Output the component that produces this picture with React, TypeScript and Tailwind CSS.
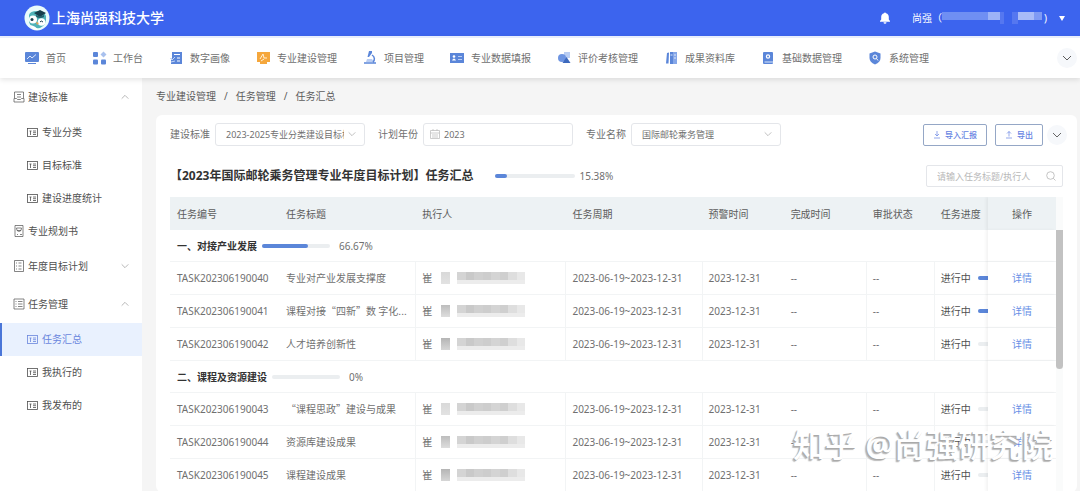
import { Fragment, type ReactNode } from "react";

interface Task {
  code: string;
  title: string;
  progress: number;
}

interface Group {
  name: string;
  percent: string;
  value: number;
  tasks: Task[];
}

const groups: Group[] = [
  {
    name: "一、对接产业发展",
    percent: "66.67%",
    value: 67,
    tasks: [
      { code: "TASK202306190040", title: "专业对产业发展支撑度", progress: 100 },
      { code: "TASK202306190041", title: "课程对接“四新”数 字化...", progress: 100 },
      { code: "TASK202306190042", title: "人才培养创新性", progress: 0 },
    ],
  },
  {
    name: "二、课程及资源建设",
    percent: "0%",
    value: 0,
    tasks: [
      { code: "TASK202306190043", title: "“课程思政”建设与成果", progress: 0 },
      { code: "TASK202306190044", title: "资源库建设成果", progress: 0 },
      { code: "TASK202306190045", title: "课程建设成果", progress: 0 },
    ],
  },
];

const navItems: { label: string; icon: ReactNode }[] = [
  {
    label: "首页",
    icon: (
      <>
        <rect x="1" y="2" width="14" height="10" rx="1" fill="#5b86d9" />
        <path d="M4 13.5h8" stroke="#5b86d9" />
        <path d="M3 9l3-3 2 2 4-3.5" fill="none" stroke="#dbe7fb" />
      </>
    ),
  },
  {
    label: "工作台",
    icon: (
      <>
        <rect x="2" y="2" width="5" height="5" rx="1" fill="#5b86d9" />
        <rect x="2" y="9.5" width="5" height="5" rx="1" fill="#5b86d9" />
        <rect x="10" y="9.5" width="5" height="5" rx="1" fill="#5b86d9" />
        <path d="M12.5 1.5l3 3-3 3-3-3z" fill="#a9c1ee" />
      </>
    ),
  },
  {
    label: "数字画像",
    icon: (
      <>
        <path d="M4 2h10v12H3V9.500L4 8z" fill="#5b86d9" />
        <path d="M6 4.500h6M9 8h3M9 11h3" stroke="#fff" />
        <path d="M2 8l2 2 3-3M3 12l4-1" fill="none" stroke="#c5d7f7" />
      </>
    ),
  },
  {
    label: "专业建设管理",
    icon: (
      <>
        <path d="M2 2h13v10H2zM5 12h7v2H5z" fill="#f5a73c" />
        <path d="M5 9l3-5 1 4h3M6 11l3-2" fill="none" stroke="#fff0d8" />
      </>
    ),
  },
  {
    label: "项目管理",
    icon: (
      <>
        <path d="M7 1h3v2l-3 4H5.500z" fill="#5b86d9" />
        <path d="M4 12l1-3h5l2 3z" fill="#b9cdf3" />
        <path d="M2 13h12M10 5c3 2 3 5 1 7" fill="none" stroke="#5b86d9" strokeWidth="1.500" />
      </>
    ),
  },
  {
    label: "专业数据填报",
    icon: (
      <>
        <rect x="1" y="3" width="14" height="10" fill="#5b86d9" />
        <circle cx="5" cy="6.500" r="1.300" fill="#fff" />
        <path d="M3 10.500q2-4 4 0z" fill="#fff" />
        <path d="M9 6.500h4M9 9.500h4" stroke="#b9cdf3" />
      </>
    ),
  },
  {
    label: "评价考核管理",
    icon: (
      <>
        <rect x="8" y="2" width="6" height="6" fill="#b9cdf3" />
        <circle cx="6" cy="8" r="4" fill="#6e95e2" />
        <path d="M10.500 7l4 6h-8z" fill="#3d69bd" />
      </>
    ),
  },
  {
    label: "成果资料库",
    icon: (
      <>
        <path d="M4 3l2-.5-.5 11H3z" fill="#5b86d9" />
        <rect x="7" y="2" width="3" height="12" fill="#5b86d9" />
        <rect x="10" y="2" width="4" height="12" fill="#86a7e8" />
        <path d="M7.500 5h2M11 5h2M11 8h2" stroke="#dbe7fb" />
      </>
    ),
  },
  {
    label: "基础数据管理",
    icon: (
      <>
        <rect x="3" y="2" width="10" height="12" rx="1" fill="#5b86d9" />
        <circle cx="8" cy="6.500" r="1.600" fill="none" stroke="#fff" strokeWidth="1.200" />
        <path d="M4.500 12h8.500" stroke="#dbe7fb" />
      </>
    ),
  },
  {
    label: "系统管理",
    icon: (
      <>
        <path d="M8 1.500l5.500 2v4.500q0 4-5.500 6.500Q2.500 12 2.500 8V3.500z" fill="#5b86d9" />
        <circle cx="8" cy="7" r="2" fill="none" stroke="#fff" />
        <path d="M9.500 8.500l1.500 2" stroke="#fff" />
      </>
    ),
  },
];

const people = [
  "from-[#d9d9d9] to-[#e2e2e2]",
  "from-[#bdbdbd] to-[#dddddd]",
  "from-[#b5b5b5] to-[#d6d6d6]",
];

// pixel rows of the masked names
const mosaic = [
  "bg-[#d4d4d4]",
  "bg-[#c9c9c9]",
  "bg-[#d0d0d0]",
  "bg-[#cdcdcd]",
  "bg-[#d4d4d4]",
  "bg-[#cfcfcf]",
  "bg-[#dedede]",
  "bg-[#e8e8e8]",
];

function Chevron({ up = false, className = "size-3" }: { up?: boolean; className?: string }) {
  return (
    <svg viewBox="0 0 12 12" className={className} fill="none" stroke="currentColor" aria-hidden="true">
      <path d={up ? "M2 8l4-4 4 4" : "M2 4l4 4 4-4"} />
    </svg>
  );
}

function CardIcon() {
  return (
    <svg viewBox="0 0 11 11" className="size-[11px] shrink-0" fill="none" stroke="currentColor" strokeWidth=".8" aria-hidden="true">
      <rect x=".5" y="1.500" width="10" height="8" />
      <path d="M2.500 4h2M3.500 4v4M6 4h3M6 5.700h3M6 7.500h3" />
    </svg>
  );
}

function Logo() {
  return (
    <svg viewBox="0 0 26 26" className="size-[26px]" aria-hidden="true">
      <circle cx="13" cy="13" r="12.500" fill="#e9fbfb" />
      <path d="M5 10q1-4 8-4t9 5q1 9-6 12-9 1-11-6z" fill="#4fb3b8" />
      <path d="M10 8l6-3 6 3-6 4z" fill="#173f4d" />
      <path d="M12 10q4 2 8 0v2q-4 2-8 0z" fill="#24606b" />
      <circle cx="9" cy="14.500" r="4" fill="#fff" />
      <circle cx="17.500" cy="17" r="3.800" fill="#fff" />
      <circle cx="8" cy="14.500" r="1.500" fill="#173f4d" />
      <path d="M16 17q1-2 3 0" fill="none" stroke="#173f4d" />
      <path d="M12 17l3 1-2 2z" fill="#f0a24a" />
      <path d="M6 20q6 1 8 5-6 0-8-5z" fill="#fff" />
    </svg>
  );
}

function Header() {
  return (
    <header className="flex h-9 shrink-0 items-center bg-[#3c64ee] pl-6 pr-[15px] text-white">
      <Logo />
      <h1 className="ml-0.5 text-sm font-medium leading-5">上海尚强科技大学</h1>
      <button aria-label="通知" className="ml-auto">
        <svg viewBox="0 0 12 12" className="size-3" fill="currentColor" aria-hidden="true">
          <path d="M6 .5a1 1 0 0 1 1 .8C9 1.800 9.800 3.300 9.800 5v2.500L11 9v.8H1V9l1.200-1.500V5C2.200 3.300 3 1.800 5 1.300A1 1 0 0 1 6 .5zM4.500 10.300h3a1.500 1.500 0 0 1-3 0z" />
        </svg>
      </button>
      <button className="ml-[21px] flex items-center text-[10px]">
        尚强（
        <span className="flex h-3">
          <span className="h-2 w-[46px] bg-[#6f8ff3]" />
          <span className="h-2 w-3 bg-[#9cb3f7]" />
          <span className="h-3 w-1 bg-[#5577f0]" />
        </span>
        <span className="ml-2 flex h-3">
          <span className="h-3 w-1.5 bg-[#5577f0]" />
          <span className="h-2 w-4 bg-[#a8bbf8]" />
          <span className="h-2 w-2 bg-[#7f9af4]" />
        </span>
        <span className="ml-0.5">)</span>
        <svg viewBox="0 0 6 5" className="ml-3 h-[5px] w-1.5" fill="currentColor" aria-hidden="true">
          <path d="M0 0h6L3 5z" />
        </svg>
      </button>
    </header>
  );
}

function NavBar() {
  return (
    <nav className="relative z-10 flex h-[42px] shrink-0 items-center border-t-2 border-[#e8eefc] bg-white pl-6 pr-[7px] shadow-[0_2px_5px_rgba(0,0,0,0.1)]">
      <ul className="flex gap-[25px]">
        {navItems.map((item) => (
          <li key={item.label}>
            <a href="#" className="flex items-center gap-1.5 text-[10px] text-[#707070]">
              <svg viewBox="0 0 16 16" className="size-4" aria-hidden="true">
                {item.icon}
              </svg>
              {item.label}
            </a>
          </li>
        ))}
      </ul>
      <button aria-label="更多" className="ml-auto rounded-full bg-[#f6f8fb] ring-4 ring-[#f6f8fb]">
        <Chevron />
      </button>
    </nav>
  );
}

function SideGroup({
  label,
  icon,
  arrow,
}: {
  label: string;
  icon: ReactNode;
  arrow?: "up" | "down";
}) {
  return (
    <a
      href="#"
      className={`flex items-center pl-[13px] pr-3 text-[#505050] ${arrow ? "h-[38px]" : "h-8"}`}
    >
      <svg viewBox="0 0 12 12" className="mr-[3px] size-3" fill="none" stroke="currentColor" strokeWidth=".7" aria-hidden="true">
        {icon}
      </svg>
      {label}
      {arrow && <Chevron up={arrow === "up"} className="ml-auto size-[10px] text-[#aaa]" />}
    </a>
  );
}

function SideLink({ label, active = false }: { label: string; active?: boolean }) {
  return (
    <a
      href="#"
      className={`flex h-[33px] items-center gap-1 border-l-2 pl-[25px] ${
        active ? "border-[#4a76d8] bg-[#e9f1fe] text-[#6a86dd]" : "border-transparent text-[#505050]"
      }`}
    >
      <CardIcon />
      {label}
    </a>
  );
}

function Sidebar() {
  return (
    <aside className="w-[142px] shrink-0 bg-white text-[10px]">
      <SideGroup
        label="建设标准"
        arrow="up"
        icon={<path d="M1.500 1h9v6M1.500 1v6M4 3.500h4M4 6h4M1 7.500h2.500l1 1h3l1-1H11V11H1z" />}
      />
      <SideLink label="专业分类" />
      <SideLink label="目标标准" />
      <SideLink label="建设进度统计" />
      <SideGroup
        label="专业规划书"
        icon={<path d="M2 .5h8v11H2zM3.500 3h5L8 5.500H4zM4 5.500q2 2 4 0M4 9.500h1M7 9.500h2" />}
      />
      <SideGroup
        label="年度目标计划"
        arrow="down"
        icon={<path d="M1.500.5h9v11h-9zM5.500 3h3M5.500 6h3M5.500 9h3M3 3h1M3 6h1M3 9h1" />}
      />
      <SideGroup
        label="任务管理"
        arrow="up"
        icon={<path d="M1 1h10v10H1zM5 3.500h4.500M5 6h4.500M5 8.500h4.500M2.500 3.500h1M2.500 6h1M2.500 8.500h1" />}
      />
      <SideLink label="任务汇总" active />
      <SideLink label="我执行的" />
      <SideLink label="我发布的" />
    </aside>
  );
}

function Filters() {
  return (
    <div className="flex items-center text-[10px] text-[#707070]">
      <label htmlFor="standard">建设标准</label>
      <div className="relative ml-[5px] mr-[13px]">
        <select
          id="standard"
          className="block h-[23px] w-[150px] appearance-none rounded-[3px] border border-[#e4e6ea] bg-white pl-2.5 pr-5 text-[9px]"
        >
          <option>2023-2025专业分类建设目标标准</option>
        </select>
        <Chevron className="pointer-events-none absolute right-2 top-1.5 size-[10px] text-[#b5b5b5]" />
      </div>
      <label htmlFor="year">计划年份</label>
      <div className="relative ml-[5px] mr-[13px]">
        <svg viewBox="0 0 10 10" className="absolute left-[7px] top-1.5 size-[10px] text-[#c0c0c0]" fill="none" stroke="currentColor" aria-hidden="true">
          <path d="M.5 1.500h9v8h-9zM.5 4h9M3 0v2M7 0v2M2 6h6M2 8h6" strokeWidth=".8" />
        </svg>
        <input
          id="year"
          defaultValue="2023"
          className="block h-[23px] w-[150px] rounded-[3px] border border-[#e4e6ea] bg-white pl-5 text-[9px]"
        />
      </div>
      <label htmlFor="major">专业名称</label>
      <div className="relative ml-[5px]">
        <select
          id="major"
          className="block h-[23px] w-[150px] appearance-none rounded-[3px] border border-[#e4e6ea] bg-white pl-2.5 pr-5 text-[9px]"
        >
          <option>国际邮轮乘务管理</option>
        </select>
        <Chevron className="pointer-events-none absolute right-2 top-1.5 size-[10px] text-[#b5b5b5]" />
      </div>
      <div className="ml-auto flex items-center gap-2 text-[8px] font-medium text-[#6482e2]">
        <button className="flex h-[22px] items-center gap-1 rounded-[2px] border border-[#95a7c6] px-[9px]">
          <svg viewBox="0 0 8 8" className="size-2" fill="none" stroke="currentColor" strokeWidth=".7" aria-hidden="true">
            <path d="M4 0v5M2 3l2 2 2-2M1 7h6" />
          </svg>
          导入汇报
        </button>
        <button className="flex h-[22px] items-center gap-1 rounded-[2px] border border-[#95a7c6] px-[9px]">
          <svg viewBox="0 0 8 8" className="size-2" fill="none" stroke="currentColor" strokeWidth=".7" aria-hidden="true">
            <path d="M4 5.500V.5M2 2.500l2-2 2 2M1 7h6" />
          </svg>
          导出
        </button>
        <button aria-label="展开" className="rounded-full bg-[#f6f8fb] text-[#666] ring-4 ring-[#f6f8fb]">
          <Chevron />
        </button>
      </div>
    </div>
  );
}

function Bar({ value, className }: { value: number; className: string }) {
  return (
    <div className={`h-1 shrink-0 rounded-full bg-[#ebeef0] ${className}`}>
      <div className="h-1 rounded-full bg-[#5b86d9]" style={{ width: `${value}%` }} />
    </div>
  );
}

const cell = "h-[33px] border-b border-[#f2f4f5] pl-[7px]";
const lined = "h-[33px] border-b border-l border-[#f2f4f5] pl-1.5";
const fixedCell =
  "sticky right-0 border-b border-[#f2f4f5] bg-white text-center shadow-[-2px_0_3px_rgba(0,0,0,0.05)]";
const headCell = "h-[33px] bg-[#edf2f4] pl-[7px] text-left font-normal";

function TaskTable() {
  return (
    <div className="mt-2.5 flex">
      <div className="min-w-0 flex-1 overflow-hidden">
        <table className="w-full table-fixed border-separate border-spacing-0 whitespace-nowrap text-[10px] leading-4 text-[#707070]">
          <colgroup>
            <col className="w-[109px]" />
            <col className="w-[136px]" />
            <col className="w-[150px]" />
            <col className="w-[136px]" />
            <col className="w-[82px]" />
            <col className="w-[82px]" />
            <col className="w-[68px]" />
            <col className="w-[54px]" />
            <col className="w-[68px]" />
          </colgroup>
          <thead className="text-[#5c5c5c]">
            <tr>
              <th className={headCell}>任务编号</th>
              <th className={headCell}>任务标题</th>
              <th className={headCell}>执行人</th>
              <th className={headCell}>任务周期</th>
              <th className={headCell}>预警时间</th>
              <th className={headCell}>完成时间</th>
              <th className={headCell}>审批状态</th>
              <th className={headCell}>任务进度</th>
              <th className="sticky right-0 bg-[#edf2f4] font-normal shadow-[-2px_0_3px_rgba(0,0,0,0.05)]">
                操作
              </th>
            </tr>
          </thead>
          <tbody>
            {groups.map((group) => (
              <Fragment key={group.name}>
                <tr>
                  <td colSpan={8} className="h-8 border-b border-[#f2f4f5] pl-[7px]">
                    <div className="flex items-center">
                      <span className="font-bold text-[#333]">{group.name}</span>
                      <Bar value={group.value} className="ml-[5px] mr-[9px] w-[68px]" />
                      {group.percent}
                    </div>
                  </td>
                  <td className={fixedCell} />
                </tr>
                {group.tasks.map((task, i) => (
                  <tr key={task.code}>
                    <td className={cell}>{task.code}</td>
                    <td className={`${cell} overflow-hidden font-['Noto_Sans_CJK_SC',sans-serif]`}>
                      {task.title}
                    </td>
                    <td className={lined}>
                      <div className="flex items-center">
                        崔
                        <span className={`ml-[9px] h-3 w-[9px] bg-linear-to-b ${people[i]}`} />
                        <span className="ml-[7px] block w-[68px]">
                          <span className="flex">
                            {mosaic.map((tone, n) => (
                              <span key={n} className={`h-2 flex-1 ${tone}`} />
                            ))}
                          </span>
                          <span className="block h-1 bg-[#ececec]" />
                        </span>
                      </div>
                    </td>
                    <td className={lined}>2023-06-19~2023-12-31</td>
                    <td className={lined}>2023-12-31</td>
                    <td className={cell}>--</td>
                    <td className={lined}>--</td>
                    <td className={`${lined} overflow-hidden text-[#505050]`}>
                      <div className="flex items-center gap-[7px]">
                        进行中
                        <Bar value={task.progress} className="w-10" />
                      </div>
                    </td>
                    <td className={fixedCell}>
                      <a href="#" className="text-[#6a90e6]">
                        详情
                      </a>
                    </td>
                  </tr>
                ))}
              </Fragment>
            ))}
          </tbody>
        </table>
      </div>
      <div className="w-[7px] shrink-0 bg-[#fafbfb] pt-[33px]">
        <div className="h-[139px] rounded-b-full bg-[#c2c2c2]" />
      </div>
    </div>
  );
}

export default function App() {
  return (
    <div className="relative flex h-screen flex-col overflow-hidden bg-[#f5f5f5] font-['Noto_Sans','Noto_Sans_CJK_SC',sans-serif] text-[#5c5c5c]">
      <Header />
      <NavBar />
      <div className="flex min-h-0 flex-1">
        <Sidebar />
        <main className="min-w-0 flex-1 pl-3.5 pr-[3px]">
          <nav aria-label="面包屑" className="flex h-[37px] items-center gap-2 text-[10px]">
            <a href="#">专业建设管理</a>
            <span>/</span>
            <a href="#">任务管理</a>
            <span>/</span>
            <span>任务汇总</span>
          </nav>
          <section className="rounded-md bg-white px-3.5 pt-2">
            <Filters />
            <div className="mt-[19px] flex items-center text-[10px] text-[#707070]">
              <h2 className="text-xs font-bold text-[#333]">
                【2023年国际邮轮乘务管理专业年度目标计划】任务汇总
              </h2>
              <Bar value={15} className="ml-[22px] mr-1 w-20" />
              15.38%
              <div className="relative ml-auto">
                <input
                  aria-label="搜索任务"
                  placeholder="请输入任务标题/执行人"
                  className="block h-[22px] w-[137px] rounded-[2px] border border-[#e4e6ea] bg-white pl-2.5 pr-5 text-[9px] placeholder:text-[#b8b8b8]"
                />
                <svg viewBox="0 0 10 10" className="absolute right-[7px] top-1.5 size-[10px] text-[#b5b5b5]" fill="none" stroke="currentColor" strokeWidth=".8" aria-hidden="true">
                  <circle cx="4.500" cy="4.500" r="3.800" />
                  <path d="M7.300 7.300L9.500 9.500" />
                </svg>
              </div>
            </div>
            <TaskTable />
          </section>
        </main>
      </div>
      <div className="pointer-events-none absolute bottom-[26px] right-[26px] z-20 text-[32px] font-medium leading-10 text-white [text-shadow:-1px_1px_0_#aaa,-2px_2px_1px_#bbb]">
        知乎 @尚强研究院
      </div>
    </div>
  );
}
